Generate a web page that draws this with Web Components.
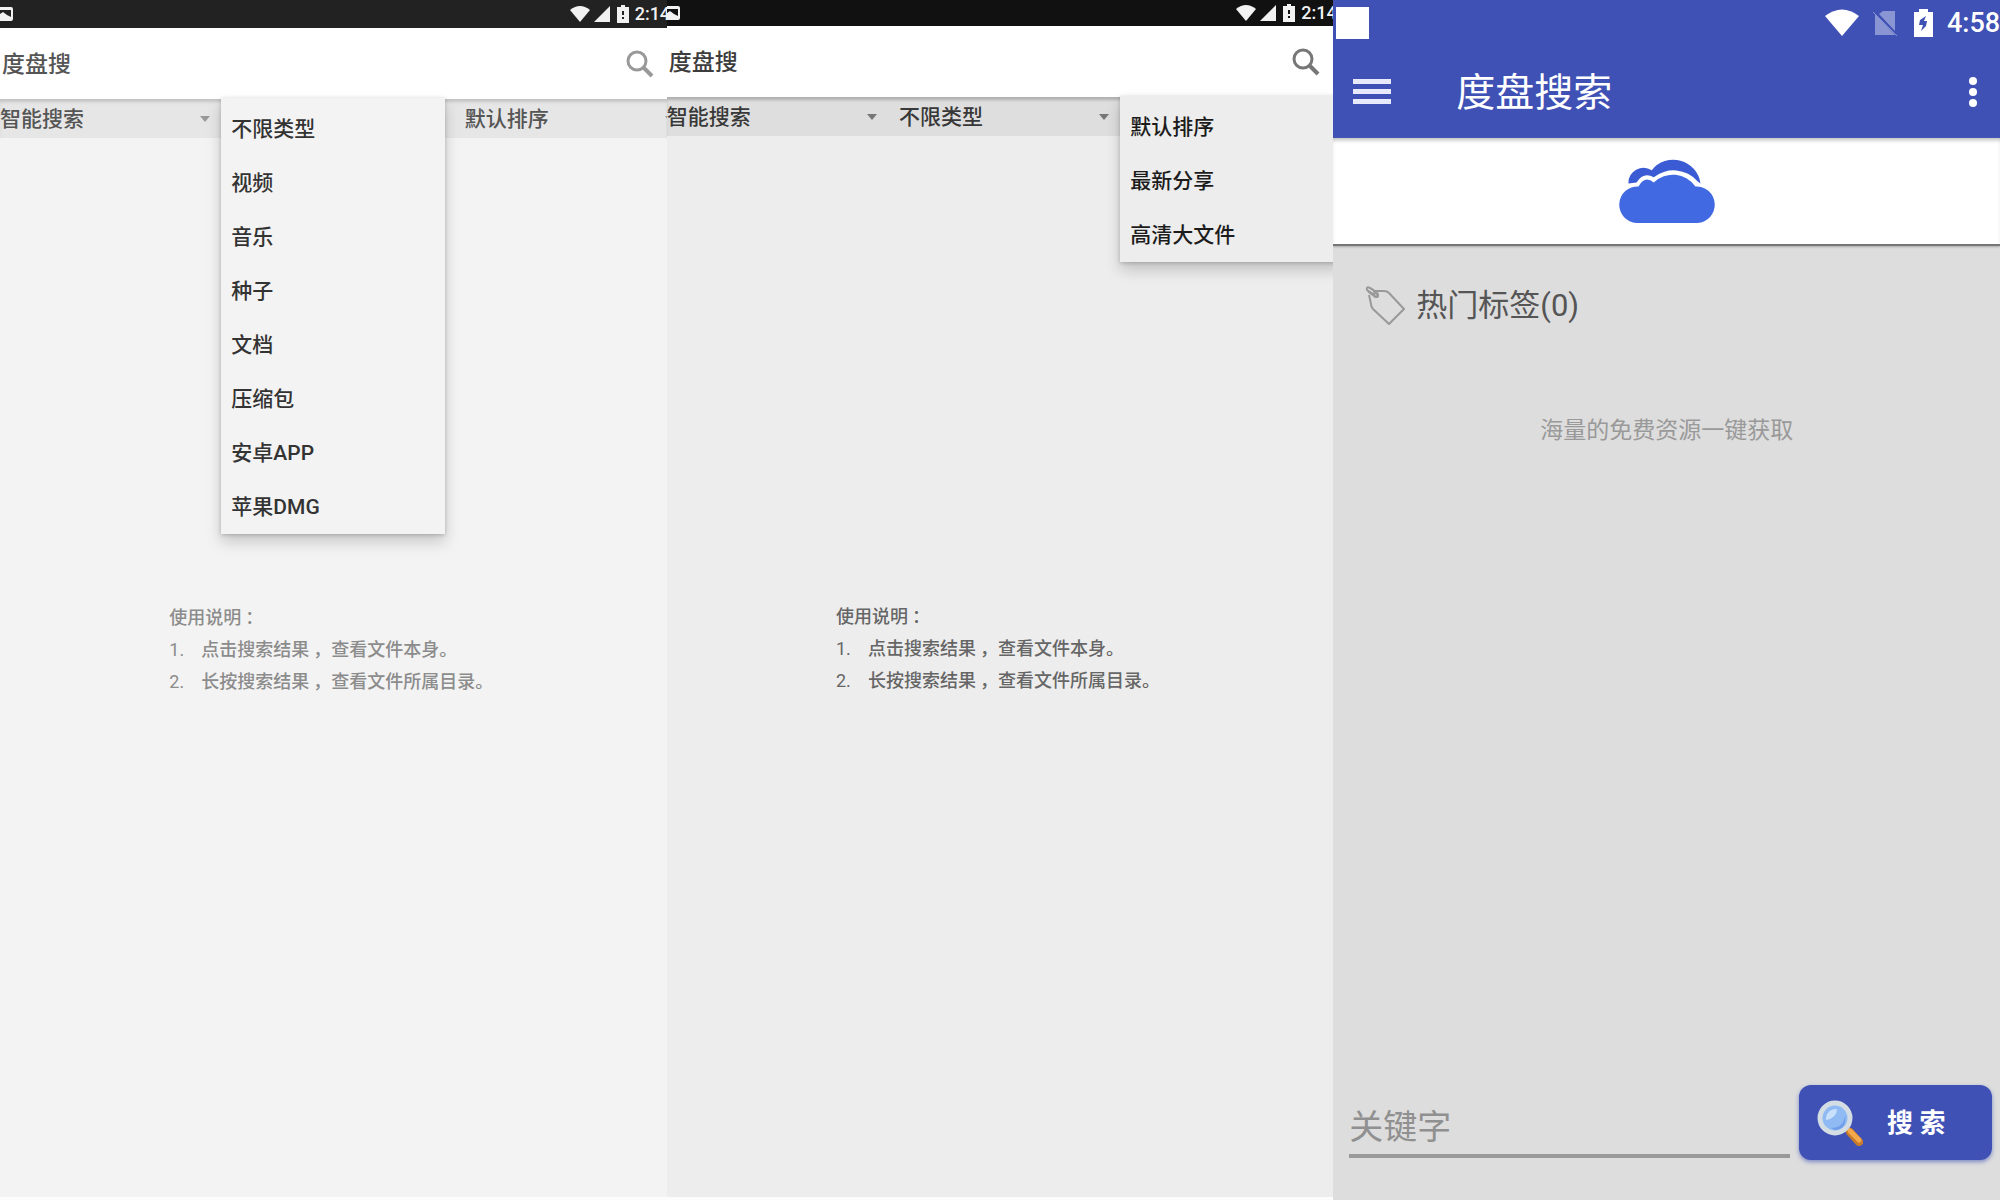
<!DOCTYPE html>
<html lang="zh-CN">
<head>
<meta charset="utf-8">
<title>度盘搜索</title>
<style>
  html, body { margin: 0; height: 100%; }
  body {
    display: grid;
    grid-template-columns: repeat(3, minmax(0, 1fr));
    min-height: 100vh;
    font-family: Roboto, "Noto Sans CJK SC", sans-serif;
    overflow: hidden;
  }
  .light {
    --screen: #f3f3f3; --status: #222; --status-height: 28px; --bar: #e6e6e6;
    --bar-edge: #c4c4c4; --title: #555; --field: #555; --option: #333; --note: #8c8c8c; --icon: #999;
  }
  .dark {
    --screen: #ededed; --status: #111; --status-height: 26px; --bar: #dedede;
    --bar-edge: #b0b0b0; --title: #3c3c3c; --field: #383838; --option: #1c1c1c; --note: #666; --icon: #777;
  }
</style>
</head>
<body>
<phone-screen class="light">
  <status-strip slot="top" time="2:14"></status-strip>
  <title-bar slot="top">度盘搜</title-bar>
  <filter-bar slot="top">
    <filter-field name="搜索方式" value="智能搜索"></filter-field>
    <filter-field name="类型" value="不限类型" open>
      <option-list options="不限类型,视频,音乐,种子,文档,压缩包,安卓APP,苹果DMG"></option-list>
    </filter-field>
    <filter-field name="排序" value="默认排序"></filter-field>
  </filter-bar>
  <usage-notes></usage-notes>
</phone-screen>
<phone-screen class="dark">
  <status-strip slot="top" time="2:14"></status-strip>
  <title-bar slot="top">度盘搜</title-bar>
  <filter-bar slot="top">
    <filter-field name="搜索方式" value="智能搜索"></filter-field>
    <filter-field name="类型" value="不限类型"></filter-field>
    <filter-field name="排序" value="默认排序" open>
      <option-list options="默认排序,最新分享,高清大文件"></option-list>
    </filter-field>
  </filter-bar>
  <usage-notes></usage-notes>
</phone-screen>
<search-home></search-home>

<script>
const define = (name, markup, setup) => {
  const template = document.createElement('template');
  template.innerHTML = '<style>*{box-sizing:border-box}</style>' + markup;
  customElements.define(name, class extends HTMLElement {
    constructor() {
      super();
      this.attachShadow({ mode: 'open' }).append(template.content.cloneNode(true));
    }
    connectedCallback() { if (setup) setup(this, this.shadowRoot); }
  });
};

define('phone-screen', `
<style>
  :host { display: flex; flex-direction: column; min-width: 0; overflow: hidden;
    background: var(--screen); border-bottom: 3px solid #fcfcfc; }
  main { flex: 1; display: flex; justify-content: center; align-items: center; padding-bottom: 36px; }
</style>
<slot name="top"></slot>
<main><slot></slot></main>`);

define('status-strip', `
<style>
  :host { display: flex; align-items: center; justify-content: space-between; flex: none;
    height: var(--status-height); background: var(--status); color: #f2f2f2; overflow: hidden; }
  div { display: flex; align-items: center; gap: 4px; }
  svg { display: block; fill: currentColor; }
  time { width: 32px; font-size: 18px; line-height: 20px; font-weight: 500; white-space: nowrap; }
</style>
<svg width="14" height="16" viewBox="0 0 14 16"><path fill-rule="evenodd" d="M0 1H11Q13 1 13 3V13Q13 15 11 15H0ZM0 4V8L3 6L7 9L11 11V4Z"/></svg>
<div>
  <svg width="20" height="18" viewBox="0 0 20 18"><path d="M0 5Q10 -3 20 5L10 17Z"/></svg>
  <svg width="19" height="18" viewBox="0 0 19 18"><path d="M16 1V17H0Z"/></svg>
  <svg width="14" height="20" viewBox="0 0 14 20"><path fill-rule="evenodd" d="M4 1H8V3H12V19H0V3H4ZM5 7V11H7V7ZM5 13V15H7V13Z"/></svg>
  <time></time>
</div>`, (host, root) => { root.querySelector('time').textContent = host.getAttribute('time'); });

define('title-bar', `
<style>
  :host { display: flex; align-items: center; justify-content: space-between; flex: none;
    height: 71px; padding: 0 13px 0 2px; background: #fff; color: var(--title); }
  h1 { margin: 0; padding-top: 2px; font-size: 23px; line-height: 32px; font-weight: 500; }
  button { display: block; padding: 0; border: 0; background: none; color: var(--icon); }
  svg { display: block; }
</style>
<h1><slot></slot></h1>
<button aria-label="搜索"><svg width="28" height="28" viewBox="0 0 28 28" fill="none" stroke="currentColor"><circle cx="11" cy="11" r="9" stroke-width="3"/><path d="M17 17L26 26" stroke-width="4"/></svg></button>`);

define('filter-bar', `
<style>
  :host { display: flex; flex: none; height: 39px; background: var(--bar);
    box-shadow: inset 0 4px 3px -1px var(--bar-edge); }
</style>
<slot></slot>`);

define('filter-field', `
<style>
  :host { position: relative; display: flex; align-items: center; flex: 0 0 calc(35% - 1px); }
  label { flex: 1; display: flex; align-items: center; }
  select { flex: 1; min-width: 0; appearance: none; margin: 0; padding: 0; border: 0; background: none;
    color: var(--field); font: 500 21px/30px Roboto, "Noto Sans CJK SC", sans-serif; }
  svg { flex: none; margin-right: 22px; fill: var(--icon); }
  :host([open]) label { visibility: hidden; }
</style>
<label><select></select><svg width="10" height="6" viewBox="0 0 10 6"><path d="M0 0H10L5 6Z"/></svg></label>
<slot></slot>`, (host, root) => {
  const select = root.querySelector('select');
  select.setAttribute('aria-label', host.getAttribute('name'));
  select.replaceChildren(new Option(host.getAttribute('value')));
});

define('option-list', `
<style>
  :host { position: absolute; z-index: 2; top: -1px; left: -11px; width: 224px; background: var(--screen);
    box-shadow: 0 8px 14px rgba(0,0,0,.18), 0 1px 4px rgba(0,0,0,.2); }
  ul { margin: 0; padding: 4px 0 0; list-style: none; }
  li { padding: 0 10px; color: var(--option); font-size: 21px; line-height: 54px; font-weight: 500; white-space: nowrap; }
</style>
<ul role="listbox"></ul>`, (host, root) => {
  root.querySelector('ul').replaceChildren(...host.getAttribute('options').split(',').map(text => {
    const item = document.createElement('li');
    item.setAttribute('role', 'option');
    item.textContent = text;
    return item;
  }));
});

define('usage-notes', `
<style>
  :host { display: block; min-width: 328px; color: var(--note); font-size: 18px; line-height: 32px; font-weight: 500; }
  p, ol { margin: 0; padding: 0; list-style: none; }
  li { display: flex; }
  b { flex: none; width: 32px; font-weight: 400; }
  /* wide punctuation sits towards the middle of its cell */
  i { font-style: normal; padding-left: 4px; }
</style>
<p>使用说明<i>：</i></p>
<ol>
  <li><b>1.</b><span>点击搜索结果<i>，</i>查看文件本身。</span></li>
  <li><b>2.</b><span>长按搜索结果<i>，</i>查看文件所属目录。</span></li>
</ol>`);

define('search-home', `
<style>
  :host { display: flex; flex-direction: column; min-width: 0; overflow: hidden; background: #ddd; color: #555; }
  svg { display: block; flex: none; }
  header { background: #3f51b5; color: #fff; }
  .status, .icons, .tools, .tags, form { display: flex; align-items: center; }
  .status { height: 46px; padding-left: 3px; justify-content: space-between; }
  .app { width: 33px; height: 32px; background: #fff; }
  .icons { gap: 14px; }
  time { width: 53px; font-size: 27px; line-height: 32px; font-weight: 500; white-space: nowrap; }
  .tools { height: 92px; padding: 0 22px 0 20px; }
  .tools button { padding: 0; border: 0; background: none; color: #fff; }
  h1 { flex: 1; margin: 0 0 0 65px; padding-top: 2px; font-size: 39px; line-height: 48px; font-weight: 400; }
  .brand { display: flex; justify-content: center; padding: 20px 0 21px; background: #fff; border-bottom: 2px solid #777;
    box-shadow: inset 0 4px 4px -2px #bbb, 0 1px 2px #aaa; }
  main { flex: 1; padding: 40px 32px 0; }
  .tags { gap: 11px; }
  h2 { margin: 0; font-size: 31px; line-height: 38px; font-weight: 400; }
  p { margin: 90px 0 0; text-align: center; font-size: 23px; line-height: 30px; color: #999; }
  form { gap: 9px; padding: 0 8px 40px 16px; align-items: center; }
  label { flex: 1; display: flex; min-width: 0; }
  input { width: 100%; height: 58px; margin: 13px 0 0; padding: 0; border: 0; border-bottom: 4px solid #999; border-radius: 0;
    background: none; outline: 0; color: #555; font: 34px/48px Roboto, "Noto Sans CJK SC", sans-serif; }
  input::placeholder { color: #909090; opacity: 1; }
  .go { display: flex; align-items: center; gap: 24px; height: 75px; width: 193px; padding: 0 18px; border: 0; border-radius: 12px;
    background: #3f51b5; color: #fff; font: 700 26px/36px Roboto, "Noto Sans CJK SC", sans-serif; white-space: nowrap;
    box-shadow: 0 2px 4px rgba(63,81,181,.6); }
</style>
<header>
  <div class="status">
    <div class="app"></div>
    <div class="icons">
      <svg width="34" height="28" viewBox="0 0 34 28" fill="#fff"><path d="M0 7Q17 -6 34 7L17 27Z"/></svg>
      <svg width="27" height="28" viewBox="0 0 27 28"><path d="M10 2H22V22L6 5ZM2 5L22 26H2Z" fill="#8a95d3"/><path d="M0 3L24 27" stroke="#8a95d3" stroke-width="1"/></svg>
      <svg width="19" height="28" viewBox="0 0 19 28"><path d="M5 0H14V3H19V28H0V3H5Z" fill="#fff"/><path d="M12 7L6 11L5 16H9L7 22L12 17L13 12H10Z" fill="#3f51b5"/></svg>
      <time>4:58</time>
    </div>
  </div>
  <div class="tools">
    <button aria-label="菜单"><svg width="38" height="28" viewBox="0 0 38 28" fill="#e8eafc"><path d="M0 1H38V6H0ZM0 11H38V16H0ZM0 21H38V26H0Z"/></svg></button>
    <h1>度盘搜索</h1>
    <button aria-label="更多"><svg width="10" height="34" viewBox="0 0 10 34" fill="#fff"><circle cx="5" cy="6" r="4"/><circle cx="5" cy="17" r="4"/><circle cx="5" cy="28" r="4"/></svg></button>
  </div>
</header>
<div class="brand">
  <svg width="98" height="65" viewBox="0 0 96 64"><path d="M10 25A15 15 0 0 1 33 12A27 27 0 0 1 81 25L78 23A31 31 0 0 0 35 19Q25 13 18 24Z" fill="#3a5bd3"/><path d="M18 64A18 18 0 0 1 20 28Q26 17 35 24A27 27 0 0 1 76 28A18 18 0 0 1 78 64Z" fill="#4169e1"/></svg>
</div>
<main>
  <div class="tags">
    <svg width="40" height="40" viewBox="0 0 40 40" fill="none" stroke="#999" stroke-width="2" stroke-linejoin="round"><path d="M8 5L19 5Q22 5 24 7L39 23L24 38L8 23Q6 21 6 18L4 9"/><path d="M12 11Q6 9 2 4Q1 0 5 2Q11 5 13 10ZM2 4L8 8L12 6" stroke-width="2"/><circle cx="11" cy="9" r="2"/></svg>
    <h2>热门标签(0)</h2>
  </div>
  <p>海量的免费资源一键获取</p>
</main>
<form>
  <label><input type="text" placeholder="关键字" aria-label="关键字"></label>
  <button class="go" type="button">
    <svg width="46" height="46" viewBox="0 0 46 46"><path d="M28 28L32 32" stroke="#aeb6c2" stroke-width="4"/><path d="M33 32L42 42" stroke="#c77a2b" stroke-width="8" stroke-linecap="round"/><path d="M33 31L42 40" stroke="#f5a94a" stroke-width="5" stroke-linecap="round"/><circle cx="18" cy="18" r="15" fill="#8fbaf3" stroke="#d5dde4" stroke-width="5"/><path d="M9 20A10 10 0 0 1 20 9Q20 18 9 20Z" fill="#c9e0fb"/><path d="M14 28Q27 28 28 15Q30 29 18 30Z" fill="#6f9de8"/></svg>
    <span>搜 索</span>
  </button>
</form>`);
</script>
</body>
</html>
